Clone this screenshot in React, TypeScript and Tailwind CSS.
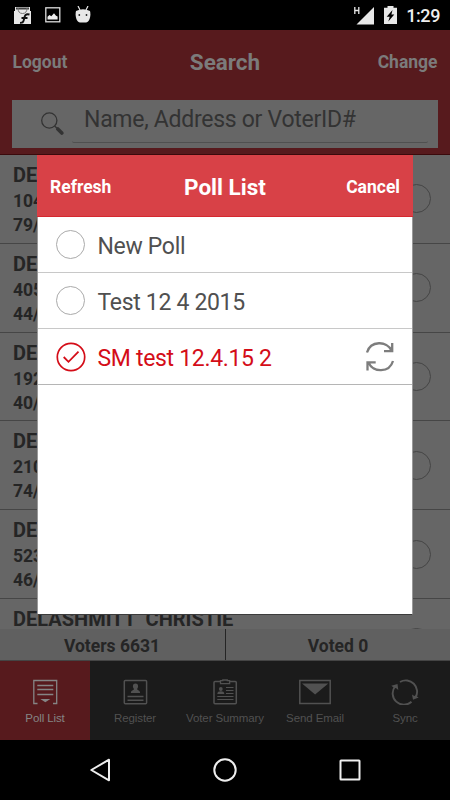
import type { ReactNode } from "react";

const voters = [
  { name: "DE", address: "104", info: "79/" },
  { name: "DE", address: "405", info: "44/" },
  { name: "DE", address: "192", info: "40/" },
  { name: "DE", address: "210", info: "74/" },
  { name: "DE", address: "523", info: "46/" },
  { name: "DELASHMITT  CHRISTIE", address: "", info: "" },
];

const polls = [
  { name: "New Poll", selected: false },
  { name: "Test 12 4 2015", selected: false },
  { name: "SM test 12.4.15 2", selected: true },
];

const tabs: { label: string; icon: ReactNode }[] = [
  {
    label: "Poll List",
    icon: (
      <svg viewBox="0 0 32 26" fill="none" stroke="currentColor" className="h-[26px] w-8">
        <path d="M8.500 24.500H4.800V1.500h22.900v23H24" strokeWidth="1.300" />
        <path d="M8.300 6.500h16M8.300 10.500h16M8.300 15.500h16" strokeWidth="1.700" />
        <path d="M11.300 20h10l-5 3.300z" fill="currentColor" stroke="none" />
      </svg>
    ),
  },
  {
    label: "Register",
    icon: (
      <svg viewBox="0 0 32 26" fill="none" stroke="currentColor" className="h-[26px] w-8">
        <rect x="5.300" y="1.500" width="22.300" height="23.200" rx="1" strokeWidth="1.500" />
        <path d="M8.500 17.500h16M8.500 21.200h16" strokeWidth="1.500" />
        <path
          d="M16.500 4.500c1.800 0 2.700 1.200 2.600 2.900-.1 1.200-.7 1.800-1 2.600 0 1.300 3 1.200 3 3.900h-9.200c0-2.700 3.100-2.600 3.100-3.900-.4-.8-1-1.400-1.100-2.600-.1-1.700.8-2.900 2.600-2.900z"
          fill="currentColor"
          stroke="none"
        />
      </svg>
    ),
  },
  {
    label: "Voter Summary",
    icon: (
      <svg viewBox="0 0 32 26" fill="none" stroke="currentColor" className="h-[26px] w-8">
        <path d="M11.500 2.500H6a1 1 0 0 0-1 1v20.200a1 1 0 0 0 1 1h20.300a1 1 0 0 0 1-1V3.500a1 1 0 0 0-1-1h-5.800" strokeWidth="1.500" />
        <path d="M11.500 1.700h2.300V1h4.500v.7h2.300v3h-9.100z" strokeWidth="1.300" />
        <circle cx="11.800" cy="10" r="1.900" fill="currentColor" stroke="none" />
        <path d="M8.300 15c0-2.100 1.500-2.800 3.500-2.800s3.500.7 3.500 2.800z" fill="currentColor" stroke="none" />
        <path d="M17 8.500h7.500M17 11.500h7.500M17 14.500h7.500M8.300 17.500h16.200M8.300 20.500h16.200" strokeWidth="1.100" />
      </svg>
    ),
  },
  {
    label: "Send Email",
    icon: (
      <svg viewBox="0 0 32 26" fill="none" stroke="currentColor" className="h-[26px] w-8">
        <rect x=".8" y="1.500" width="30.400" height="23" strokeWidth="1.500" />
        <path d="M3 4.500h26.300L16.100 15.500z" fill="currentColor" stroke="none" />
      </svg>
    ),
  },
  {
    label: "Sync",
    icon: (
      <svg viewBox="0 0 32 26" fill="none" stroke="currentColor" className="h-[26px] w-8">
        <path d="M11 3A11.300 11.300 0 0 1 26.500 18.500M22.500 22.800A11.300 11.300 0 0 1 6 7.500" strokeWidth="1.900" />
        <path d="M2.300 6.700l6.200-1.600.8 5.800-2.400-2-1.200.3zM29.600 18.500l-5.600 2.300-1-5.200 2.300 1.500 1.300-.7z" fill="currentColor" stroke="none" />
      </svg>
    ),
  },
];

function StatusBar() {
  return (
    <div className="flex h-[30px] shrink-0 items-center bg-black text-[#e8e8e8]">
      <svg viewBox="0 0 18 19" className="ml-[14px] h-[19px] w-[18px]">
        <path d="M1 1h15v4h1v13H0V5h1z" fill="#e8e8e8" />
        <path d="M2 1.500h13v2H2z" fill="#444" />
        <path d="M4 2q0 5.500 4.500 5.500T13 2" fill="none" stroke="#777" strokeWidth="1" />
        <path d="M15.500 8.500c-4-1-4.800 1-5.200 3.500l-.8 3c-.4 1.600-1.500 2-3.500 1.800M7.500 12h6" fill="none" stroke="#111" strokeWidth="1.900" />
      </svg>
      <svg viewBox="0 0 16 16" className="ml-[13px] h-4 w-4">
        <rect x=".8" y=".8" width="14" height="14" fill="none" stroke="#ddd" strokeWidth="1.300" />
        <path d="M2.500 12.500V9.700l2-1.700 1.800 1.200L9 6.200l2 2.500 1.600.8v3z" fill="#eee" />
      </svg>
      <svg viewBox="0 0 16 18" className="ml-[14px] h-[18px] w-4">
        <path d="M3 0l2 4M13 0l-2 4" stroke="#e8e8e8" strokeWidth="1.200" />
        <path d="M1 5Q8 1.500 15 5c1.300 5-.8 11.500-4 11.500H5C1.800 16.500-.3 10 1 5z" fill="#e8e8e8" />
        <circle cx="4.300" cy="9" r=".9" fill="#222" />
        <circle cx="11.500" cy="9" r=".9" fill="#222" />
      </svg>
      <svg viewBox="0 0 20 19" className="ml-auto h-[19px] w-5">
        <path d="M.8 1v7M4.800 1v7M.8 4.500h4" stroke="#e8e8e8" strokeWidth="1.300" />
        <path d="M20 1v17.500H2.500z" fill="#e8e8e8" />
      </svg>
      <svg viewBox="0 0 13 18" className="ml-[10px] h-[18px] w-[13px]">
        <path d="M3.500 0h6v1.800H13V18H0V1.800h3.500z" fill="#e8e8e8" />
        <path d="M8.500 4L2.700 10.700h3L4.300 15.500l6-7H7.400z" fill="#000" />
      </svg>
      <span className="mr-[10px] ml-[9px] text-[18px] font-medium tracking-[-0.4px] text-[#eee]">1:29</span>
    </div>
  );
}

function SearchHeader() {
  return (
    <header className="h-[125px] shrink-0 border-b border-[#3b0a0c] bg-[#571a1d] px-3 font-bold text-[#7b7b7b]">
      <div className="grid h-[65px] grid-cols-3 items-center px-[.5px] text-[17.500px]">
        <span>Logout</span>
        <span className="text-center text-[22.500px]">Search</span>
        <span className="text-right">Change</span>
      </div>
      <div className="mt-[5px] flex h-12 bg-[#666] pl-7">
        <svg viewBox="0 0 24 24" className="mt-3 h-6 w-6" fill="none" stroke="#333">
          <circle cx="9.300" cy="8.500" r="7.600" strokeWidth="1.300" />
          <path d="M14.600 14l2.200 2" strokeWidth="1.300" />
          <path d="M17.800 17l4 4" strokeWidth="3.600" strokeLinecap="round" />
        </svg>
        <div className="mr-[10px] ml-2 h-[43px] flex-1 rounded-b-[2px] border-b border-[#505050] pl-3 text-[23px] leading-[40px] font-normal tracking-[-0.280px] whitespace-nowrap text-[#333]">
          Name, Address or VoterID#
        </div>
      </div>
    </header>
  );
}

function VoterList() {
  return (
    <div className="flex-1 overflow-hidden bg-[#666] font-bold text-[#252525]">
      {voters.map((voter, i) => (
        <div key={i} className="flex h-[88.800px] items-center justify-between border-b border-[#464646] pr-[19px] pl-[13px]">
          <div className="h-full pt-2">
            <p className="text-[20px] leading-[25px] whitespace-pre">{voter.name}</p>
            <p className="mt-px text-[17.500px] leading-6">{voter.address}</p>
            <p className="text-[17.500px] leading-6">{voter.info}</p>
          </div>
          <span className="size-[29px] rounded-full border border-[#454545]" />
        </div>
      ))}
    </div>
  );
}

function TabBar() {
  return (
    <nav className="grid h-[79px] shrink-0 grid-cols-5 bg-[#1b1b1b] text-[#515151]">
      {tabs.map((tab, i) => (
        <div
          key={tab.label}
          className={
            i === 0
              ? "flex flex-col items-center bg-[#571a1d] pt-[18px] text-[#858585]"
              : "flex flex-col items-center pt-[18px]"
          }
        >
          {tab.icon}
          <span className="mt-[5px] font-['Liberation_Sans',sans-serif] text-[11.500px] leading-4 tracking-[-0.1px] whitespace-nowrap">
            {tab.label}
          </span>
        </div>
      ))}
    </nav>
  );
}

function PollDialog() {
  return (
    <div className="absolute top-[155px] left-[37px] h-[460px] w-[376px] border-r border-b border-l border-r-[#999] border-b-[#3c3c3c] border-l-[#999] bg-white">
      <div className="-mx-px grid h-[62px] grid-cols-[1fr_auto_1fr] items-center border-b border-[#d5282f] bg-[#d84147] px-[13px] pt-[3px] text-[17.500px] font-bold text-white">
        <span>Refresh</span>
        <span className="pt-[2px] text-[22.500px]">Poll List</span>
        <span className="text-right">Cancel</span>
      </div>
      {polls.map((poll) => (
        <div
          key={poll.name}
          className={
            poll.selected
              ? "flex h-14 items-center border-b border-[#b5b5b5] pr-[17px] pl-[18px] text-[#d40d18]"
              : "flex h-14 items-center border-b border-[#c8c8c8] pr-[17px] pl-[18px] text-[#505050]"
          }
        >
          {poll.selected ? (
            <svg viewBox="0 0 30 30" className="size-[30px]" fill="none" stroke="currentColor">
              <circle cx="15" cy="15" r="13.700" strokeWidth="1.700" />
              <path d="M7.700 15l4.800 4.800 10-10.200" strokeWidth="1.800" />
            </svg>
          ) : (
            <span className="size-[29px] rounded-full border border-[#aaa]" />
          )}
          <span
            className={
              poll.selected
                ? "ml-[11.500px] pt-[5px] text-[23px] tracking-[-0.320px]"
                : "ml-[12.500px] pt-[5px] text-[23px] tracking-[-0.320px]"
            }
          >
            {poll.name}
          </span>
          {poll.selected && (
            <svg viewBox="0 0 30 32" className="ml-auto h-8 w-[30px]" fill="none" stroke="#7d7d7d" strokeWidth="2.300">
              <path d="M2 11.500C5.500-.5 22-.5 26.500 9.500M27.200 2v8.200H19M28 20C24.500 32 8 32 3.500 21.500M2.500 29.500v-8.200h8.200" />
            </svg>
          )}
        </div>
      ))}
    </div>
  );
}

export default function App() {
  return (
    <div className="relative flex h-[800px] w-[450px] flex-col overflow-hidden bg-black font-[Roboto,sans-serif]">
      <StatusBar />
      <SearchHeader />
      <VoterList />
      <div className="grid h-8 shrink-0 grid-cols-[226px_1fr] border-b border-[#444] bg-[#606060] text-center text-[17.500px] leading-[34px] font-bold text-[#252525]">
        <span className="h-[31px] border-r border-[#252525] pr-px">Voters 6631</span>
        <span>Voted 0</span>
      </div>
      <TabBar />
      <div className="flex h-[60px] shrink-0 items-center justify-center bg-black">
        <svg viewBox="0 0 270 24" className="h-6 w-[270px] overflow-visible" fill="none" stroke="#eee" strokeWidth="2">
          <path d="M19 1.700v20.600L1.300 12z" strokeLinejoin="round" />
          <circle cx="135" cy="12" r="10.700" />
          <rect x="250.500" y="2.500" width="19" height="19" rx=".5" />
        </svg>
      </div>
      <PollDialog />
    </div>
  );
}
